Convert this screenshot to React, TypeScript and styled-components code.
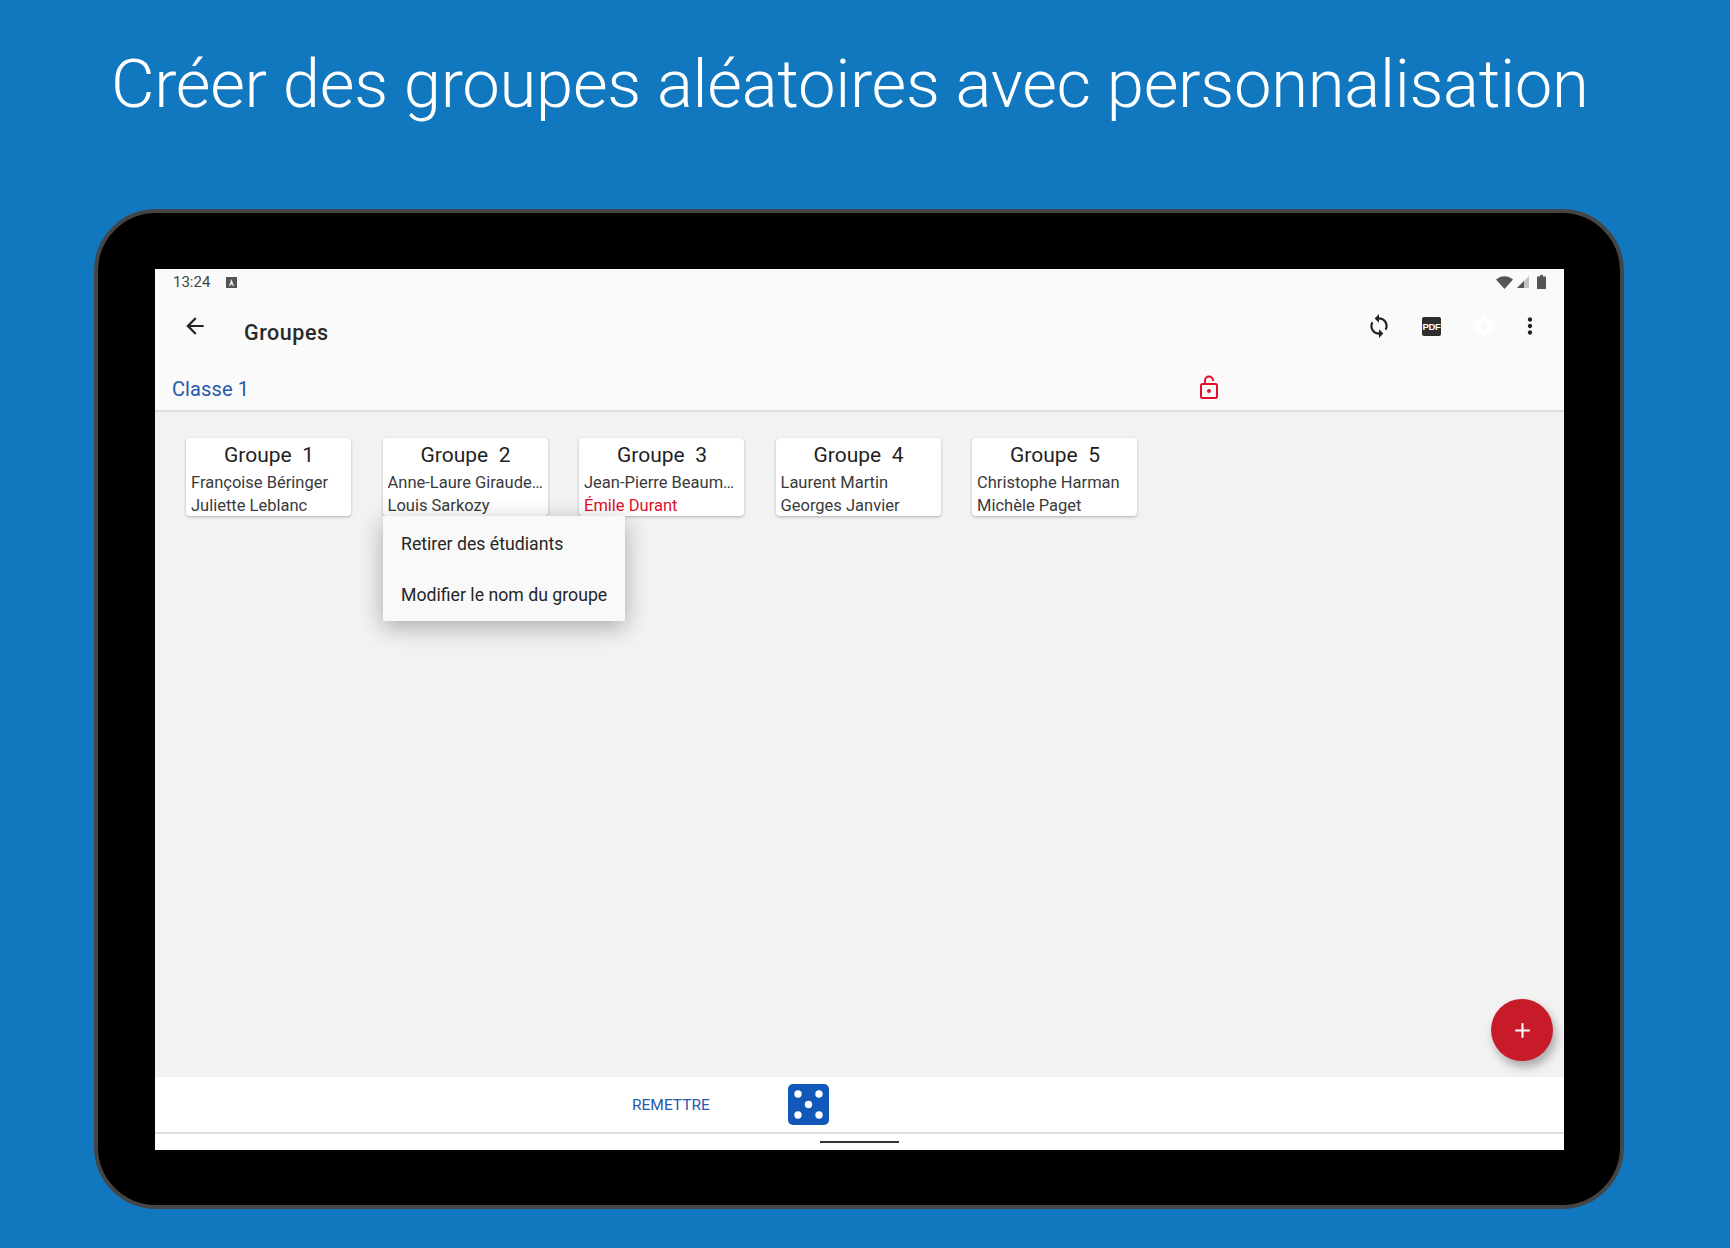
import React from 'react';
import styled, { createGlobalStyle } from 'styled-components';
import { MdArrowBack, MdSync, MdSettings, MdMoreVert, MdAdd } from 'react-icons/md';

const Global = createGlobalStyle`
  html, body { margin: 0; padding: 0; background: #1178c0; }
  body { width: 1730px; height: 1248px; overflow: hidden; font-family: Roboto, "Liberation Sans", sans-serif; }
`;

const Page = styled.div`
  width: 1730px;
  height: 1248px;
  background: #1178c0;
  padding: 40px 0 0 94px;
  box-sizing: border-box;
  overflow: hidden;
`;
const Headline = styled.h1`
  margin: 0 0 83px 17px;
  height: 86px;
  font-family: Roboto, "Liberation Sans", sans-serif;
  font-weight: 300;
  font-size: 67px;
  line-height: 88px;
  color: #fff;
  white-space: nowrap;
  letter-spacing: -0.3px;
`;
const Tablet = styled.div`
  width: 1530px;
  height: 1000px;
  box-sizing: border-box;
  background: #000;
  border: 4px solid #454545;
  border-radius: 62px;
  padding: 56px 0 0 57px;
`;
const Screen = styled.div`
  position: relative;
  width: 1409px;
  height: 881px;
  display: flex;
  flex-direction: column;
  background: #f2f2f2;
  overflow: hidden;
`;
const StatusBar = styled.div`
  height: 26px;
  flex: none;
  display: flex;
  align-items: center;
  padding: 0 18px 0 18px;
  background: #fafafa;
  color: #444;
  font-size: 15px;
`;
const Clock = styled.span`
  width: 53px;
`;
const StatusRight = styled.div`
  margin-left: auto;
  display: flex;
  align-items: center;
  gap: 4px;
`;
const Toolbar = styled.div`
  height: 62px;
  flex: none;
  box-sizing: border-box;
  display: flex;
  align-items: center;
  background: #fafafa;
  padding: 0 14px 0 27px;
`;
const BackSlot = styled.div`
  width: 62px;
  display: flex;
  color: #222;
  font-size: 26px;
`;
const PageTitle = styled.div`
  font-size: 21.5px;
  font-weight: 500;
  color: #2a2a2a;
  letter-spacing: 0.55px;
  padding-top: 12px;
`;
const Actions = styled.div`
  margin-left: auto;
  display: flex;
  align-items: center;
`;
const ActionSlot = styled.div<{ $w: number; $c?: string }>`
  width: ${p => p.$w}px;
  display: flex;
  justify-content: center;
  align-items: center;
  color: ${p => p.$c ?? '#222'};
  font-size: 26px;
`;
const PdfBadge = styled.div`
  width: 19px;
  height: 19px;
  border-radius: 2px;
  background: #2e2e2e;
  color: #fff;
  font-size: 9.5px;
  font-weight: 700;
  line-height: 19px;
  letter-spacing: -0.3px;
  text-align: center;
  font-family: "Liberation Sans", sans-serif;
`;
const ClassRow = styled.div`
  height: 55px;
  flex: none;
  display: flex;
  align-items: center;
  background: #fafafa;
  padding: 8px 0 0 17px;
  box-sizing: border-box;
  border-bottom: 2px solid #dcdcdc;
`;
const ClassName = styled.div`
  font-size: 20px;
  color: #2559a9;
  width: 1028px;
  letter-spacing: 0.1px;
  padding-top: 2px;
`;
const LockSlot = styled.div`
  display: flex;
  margin-top: -2px;
`;
const Board = styled.div`
  flex: 1;
  position: relative;
  display: flex;
  align-items: flex-start;
  gap: 31.5px;
  padding: 26px 0 0 31px;
`;
const Card = styled.div`
  width: 165px;
  height: 78px;
  flex: none;
  box-sizing: border-box;
  background: #fff;
  border-radius: 4px;
  box-shadow: 0 1px 3px rgba(0, 0, 0, 0.28);
  padding: 4px 4px 0 5px;
  overflow: hidden;
`;
const CardTitle = styled.div`
  font-size: 21px;
  line-height: 26px;
  margin-bottom: 4px;
  text-align: center;
  color: #1f1f1f;
  white-space: pre;
`;
const Student = styled.div<{ $red?: boolean }>`
  font-size: 16.5px;
  line-height: 22.5px;
  color: ${p => (p.$red ? '#e0102a' : '#3a3a3a')};
  white-space: nowrap;
  overflow: hidden;
`;
const Menu = styled.div`
  position: absolute;
  left: 228px;
  top: 104px;
  width: 242px;
  height: 105px;
  box-sizing: border-box;
  padding-top: 2px;
  background: #f9f9f9;
  box-shadow: 0 6px 22px rgba(0, 0, 0, 0.3);
  display: flex;
  flex-direction: column;
  justify-content: center;
`;
const MenuItem = styled.div`
  height: 53px;
  display: flex;
  align-items: center;
  padding-left: 18px;
  font-size: 17.7px;
  color: #262626;
  white-space: nowrap;
`;
const Fab = styled.div`
  position: absolute;
  left: 1336px;
  top: 587px;
  width: 62px;
  height: 62px;
  border-radius: 50%;
  background: #c81b29;
  color: #fff;
  display: flex;
  align-items: center;
  justify-content: center;
  font-size: 25px;
  box-shadow: 3px 6px 10px rgba(0, 0, 0, 0.3);
`;
const BottomBar = styled.div`
  height: 57px;
  flex: none;
  box-sizing: border-box;
  background: #fff;
  border-bottom: 2px solid #dedede;
  display: flex;
  align-items: center;
  padding: 0 0 0 477px;
`;
const ResetLabel = styled.div`
  width: 156px;
  font-size: 15.5px;
  color: #2559a9;
  padding-top: 1px;
`;
const NavBar = styled.div`
  height: 16px;
  flex: none;
  background: #fff;
  display: flex;
  justify-content: center;
  padding-top: 7px;
  box-sizing: border-box;
`;
const NavPill = styled.div`
  width: 79px;
  height: 2px;
  background: #333;
`;

const Wifi = () => (
  <svg width="17" height="13" viewBox="0 0 17 13"><path d="M0 3.500C5-1 12-1 17 3.500L8.500 13z" fill="#555" /></svg>
);
const Signal = () => (
  <svg width="16" height="12" viewBox="0 0 16 12">
    <path d="M0 12L12 0v12z" fill="#c4c4c4" />
    <path d="M0 12L7 5v7z" fill="#555" />
  </svg>
);
const Battery = () => (
  <svg width="9" height="14" viewBox="0 0 9 14"><path d="M3 0h3v1.500h3V14H0V1.500h3z" fill="#555" /></svg>
);
const InputBadge = () => (
  <svg width="11" height="11" viewBox="0 0 11 11">
    <rect width="11" height="11" fill="#555" />
    <path d="M5.500 2L3 9h1.200l.5-1.500h1.600L6.800 9H8z" fill="#eee" />
  </svg>
);
const OpenLock = () => (
  <svg width="18" height="24" viewBox="0 0 18 24" fill="none">
    <path d="M5 9.500V5.500a4 4 0 0 1 8 0V6" stroke="#e30f26" strokeWidth="2" />
    <rect x="1" y="9" width="16" height="14" rx="1.500" stroke="#e30f26" strokeWidth="2" />
    <circle cx="9" cy="16" r="2" fill="#e30f26" />
  </svg>
);
const Dice = () => (
  <svg width="41" height="41" viewBox="0 0 41 41">
    <rect width="41" height="41" rx="5" fill="#1258b8" />
    <circle cx="10" cy="10" r="3.700" fill="#fff" />
    <circle cx="31" cy="10" r="3.700" fill="#fff" />
    <circle cx="20.500" cy="20.500" r="3.700" fill="#fff" />
    <circle cx="10" cy="31" r="3.700" fill="#fff" />
    <circle cx="31" cy="31" r="3.700" fill="#fff" />
  </svg>
);

const groups: { title: string; students: { name: string; red?: boolean }[] }[] = [
  { title: 'Groupe  1', students: [{ name: 'Françoise Béringer' }, { name: 'Juliette Leblanc' }] },
  { title: 'Groupe  2', students: [{ name: 'Anne-Laure Giraude…' }, { name: 'Louis Sarkozy' }] },
  { title: 'Groupe  3', students: [{ name: 'Jean-Pierre Beaum…' }, { name: 'Émile Durant', red: true }] },
  { title: 'Groupe  4', students: [{ name: 'Laurent Martin' }, { name: 'Georges Janvier' }] },
  { title: 'Groupe  5', students: [{ name: 'Christophe Harman' }, { name: 'Michèle Paget' }] },
];

export default function App() {
  return (
    <Page>
      <Global />
      <Headline>Créer des groupes aléatoires avec personnalisation</Headline>
      <Tablet>
        <Screen>
          <StatusBar>
            <Clock>13:24</Clock>
            <InputBadge />
            <StatusRight>
              <Wifi />
              <Signal />
              <Battery />
            </StatusRight>
          </StatusBar>
          <Toolbar>
            <BackSlot><MdArrowBack /></BackSlot>
            <PageTitle>Groupes</PageTitle>
            <Actions>
              <ActionSlot $w={53}><MdSync /></ActionSlot>
              <ActionSlot $w={53}><PdfBadge>PDF</PdfBadge></ActionSlot>
              <ActionSlot $w={52} $c="#fff"><MdSettings /></ActionSlot>
              <ActionSlot $w={40}><MdMoreVert /></ActionSlot>
            </Actions>
          </Toolbar>
          <ClassRow>
            <ClassName>Classe 1</ClassName>
            <LockSlot><OpenLock /></LockSlot>
          </ClassRow>
          <Board>
            {groups.map(g => (
              <Card key={g.title}>
                <CardTitle>{g.title}</CardTitle>
                {g.students.map(s => (
                  <Student key={s.name} $red={s.red}>{s.name}</Student>
                ))}
              </Card>
            ))}
            <Menu>
              <MenuItem>Retirer des étudiants</MenuItem>
              <MenuItem>Modifier le nom du groupe</MenuItem>
            </Menu>
            <Fab><MdAdd /></Fab>
          </Board>
          <BottomBar>
            <ResetLabel>REMETTRE</ResetLabel>
            <Dice />
          </BottomBar>
          <NavBar><NavPill /></NavBar>
        </Screen>
      </Tablet>
    </Page>
  );
}
